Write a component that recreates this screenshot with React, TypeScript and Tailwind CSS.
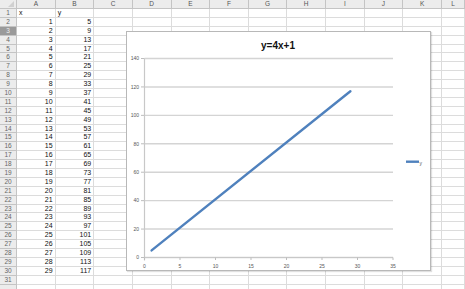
import React from "react";

const COLS = ["A", "B", "C", "D", "E", "F", "G", "H", "I", "J", "K", "L"];
const ROWS = 32;

export default function App() {
  const rows = Array.from({ length: ROWS }, (_, i) => i + 1);
  const xs = [0, 5, 10, 15, 20, 25, 30, 35];
  const ys = [0, 20, 40, 60, 80, 100, 120, 140];
  const px = (v: number) => 18.5 + v * 7.1;
  const py = (v: number) => 226.5 - v * 1.4214;
  return (
    <div className="relative w-[465px] h-[289px] overflow-hidden bg-white" style={{ fontFamily: '"Liberation Sans", Arial, sans-serif' }}>
      <div className="grid grid-cols-[17px_repeat(11,38.64px)_1fr] grid-rows-[9px_repeat(32,8.9px)]">
        <div className="relative bg-[#ececec] border-r border-b border-[#c4c4c4]">
          <div className="absolute right-[2px] bottom-[1px] w-0 h-0 border-l-[6px] border-l-transparent border-b-[6px] border-b-[#d0d0d0]" />
        </div>
        {COLS.map((c) => (
          <div key={c} className="bg-[#ececec] border-r border-b border-[#c4c4c4] text-[6.5px] leading-[8px] text-[#555] text-center">
            {c}
          </div>
        ))}
        {rows.map((r) => (
          <React.Fragment key={r}>
            <div className={`border-r border-b border-[#c4c4c4] text-[6.5px] leading-[8px] text-center ${r === 3 ? "bg-[#9a9a9a] text-[#eee]" : "bg-[#ececec] text-[#666]"}`}>
              {r <= 31 ? r : null}
            </div>
            {COLS.map((c, ci) => {
              let content: React.ReactNode = null;
              let align = "text-right pr-[2px]";
              if (r === 1 && ci === 0) { content = "x"; align = "text-left pl-[2px]"; }
              else if (r === 1 && ci === 1) { content = "y"; align = "text-left pl-[2px]"; }
              else if (r >= 2 && r <= 30 && ci === 0) content = r - 1;
              else if (r >= 2 && r <= 30 && ci === 1) content = 4 * (r - 1) + 1;
              return (
                <div key={c} className={`border-r border-b border-[#dcdcdc] text-[7px] leading-[8px] text-[#111] ${align}`}>
                  {content}
                </div>
              );
            })}
          </React.Fragment>
        ))}
      </div>

      <div className="absolute left-[126px] top-[31px] w-[305px] h-[240px] bg-white border border-[#b8b8b8] shadow-[1px_1px_1px_rgba(0,0,0,0.12)]">
        <svg width="305" height="240" className="block absolute -left-px -top-px">
          <text x="152" y="17.5" textAnchor="middle" fontSize="10" fontWeight="bold" fill="#111" fontFamily="Liberation Sans, Arial, sans-serif">y=4x+1</text>
          {ys.map((v) => (
            <g key={v}>
              <line x1={18.5} x2={267} y1={py(v)} y2={py(v)} stroke="#d4d4d4" strokeWidth="1.4" />
              <line x1={15} x2={18.5} y1={py(v)} y2={py(v)} stroke="#bdbdbd" strokeWidth="1" />
              <text x="13" y={py(v) + 1.8} textAnchor="end" fontSize="5" fill="#555" fontFamily="Liberation Sans, Arial, sans-serif">{v}</text>
            </g>
          ))}
          <line x1={18.5} x2={18.5} y1={py(140)} y2={py(0) + 3} stroke="#c8c8c8" strokeWidth="1.2" />
          <line x1={18.5} x2={267} y1={py(0)} y2={py(0)} stroke="#c8c8c8" strokeWidth="1.2" />
          {xs.map((v) => (
            <g key={v}>
              <line x1={px(v)} x2={px(v)} y1={py(0)} y2={py(0) + 2.5} stroke="#bdbdbd" strokeWidth="1" />
              <text x={px(v)} y="236.5" textAnchor="middle" fontSize="5" fill="#555" fontFamily="Liberation Sans, Arial, sans-serif">{v}</text>
            </g>
          ))}
          <line x1={px(1)} y1={py(5)} x2={px(29)} y2={py(117)} stroke="#4f81bd" strokeWidth="2.4" strokeLinecap="round" />
          <line x1={280} x2={293} y1={130.7} y2={130.7} stroke="#4f81bd" strokeWidth="2.4" />
          <text x="293.5" y="134" fontSize="5" fill="#555" fontFamily="Liberation Sans, Arial, sans-serif">y</text>
        </svg>
      </div>
    </div>
  );
}
